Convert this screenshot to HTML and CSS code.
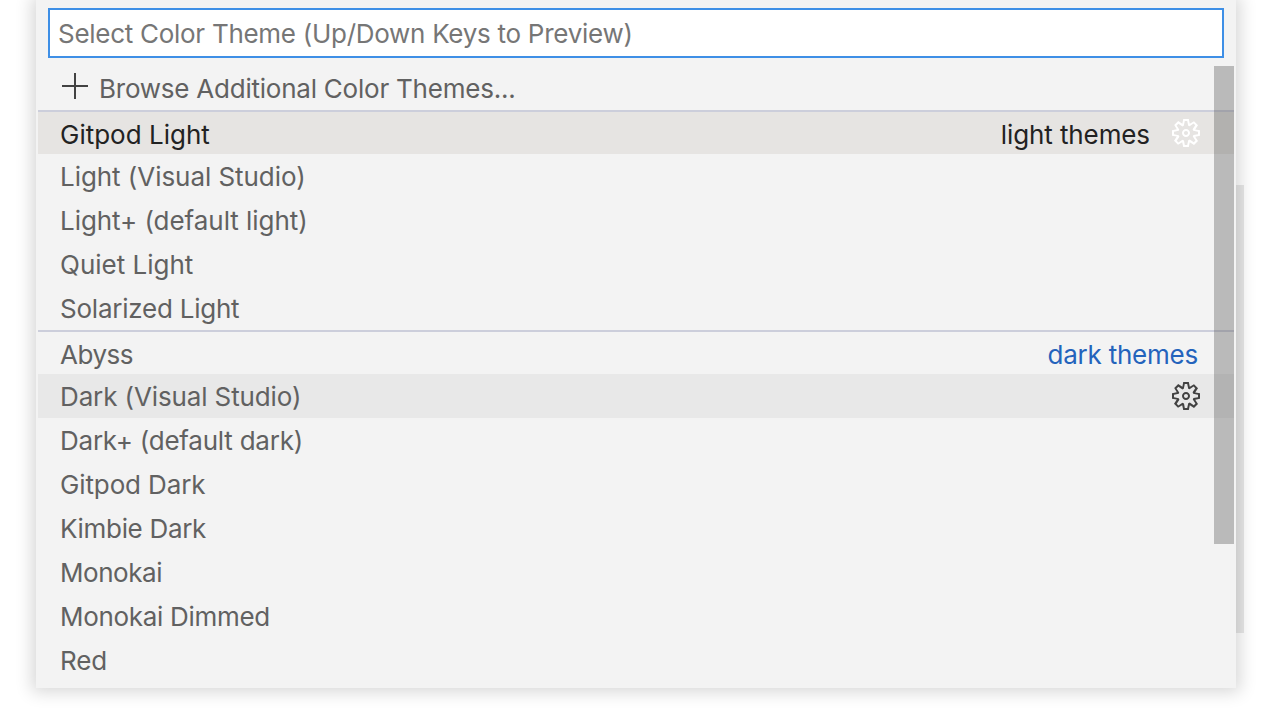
FILE: index.html
```html
<!DOCTYPE html>
<html lang="en">
<head>
<meta charset="utf-8">
<title>Select Color Theme</title>
<link rel="stylesheet" href="styles.css">
</head>
<body>
<svg class="symbols" aria-hidden="true">
  <symbol id="gear" viewBox="0 0 16 16"><path fill-rule="evenodd" d="M9.1 4.4L8.6 2H7.4l-.5 2.4-.7.3-2-1.3-.9.8 1.3 2-.2.7-2.4.5v1.2l2.4.5.3.8-1.3 2 .8.8 2-1.3.8.3.4 2.3h1.2l.5-2.4.8-.3 2 1.3.8-.8-1.3-2 .3-.8 2.3-.4V7.4l-2.4-.5-.3-.8 1.3-2-.8-.8-2 1.3-.7-.2zM9.4 1l.5 2.4L12 2.1l2 2-1.4 2.1 2.4.4v2.8l-2.4.5L14 12l-2 2-2.1-1.4-.5 2.4H6.6l-.5-2.4L4 13.9l-2-2 1.4-2.1L1 9.4V6.6l2.4-.5L2.1 4l2-2 2.1 1.4.4-2.4h2.8zm.6 7c0 1.1-.9 2-2 2s-2-.9-2-2 .9-2 2-2 2 .9 2 2zM8 9c.6 0 1-.4 1-1s-.4-1-1-1-1 .4-1 1 .4 1 1 1z"/></symbol>
</svg>
<div class="page-scrollbar"></div>
<main class="picker">
  <div class="field"><span class="placeholder">Select Color Theme (Up/Down Keys to Preview)</span></div>
  <div class="list">
    <div class="row"><svg class="plus" viewBox="0 0 26 26"><path d="M12 0h2v12h12v2H14v12h-2V14H0v-2h12z"/></svg><span class="label snug">Browse Additional Color Themes...</span></div>
    <div class="row group selected"><span class="label loose">Gitpod Light</span><span class="category">light themes</span><svg class="gear"><use href="#gear"/></svg></div>
    <div class="row"><span class="label open">Light (Visual Studio)</span></div>
    <div class="row"><span class="label open">Light+ (default light)</span></div>
    <div class="row"><span class="label loose">Quiet Light</span></div>
    <div class="row"><span class="label snug">Solarized Light</span></div>
    <div class="row group"><span class="label tight">Abyss</span><span class="category last snug">dark themes</span></div>
    <div class="row hovered"><span class="label">Dark (Visual Studio)</span><svg class="gear"><use href="#gear"/></svg></div>
    <div class="row"><span class="label snug">Dark+ (default dark)</span></div>
    <div class="row"><span class="label">Gitpod Dark</span></div>
    <div class="row"><span class="label close">Kimbie Dark</span></div>
    <div class="row"><span class="label tight">Monokai</span></div>
    <div class="row"><span class="label close">Monokai Dimmed</span></div>
    <div class="row"><span class="label">Red</span></div>
    <div class="scrollbar"></div>
  </div>
</main>
</body>
</html>
```
FILE: styles.css
```css
* { box-sizing: border-box; }
body {
  margin: 0;
  height: 712px;
  overflow: hidden;
  position: relative;
  background: #fff;
  font-family: Inter, "Liberation Sans", sans-serif;
  font-size: 26px;
  line-height: 46px;
  color: #616161;
}
.symbols { position: absolute; width: 0; height: 0; }
.picker {
  position: relative;
  width: 1200px;
  height: 688px;
  margin-left: 36px;
  padding: 8px 2px 6px;
  background: #f3f3f3;
  box-shadow: 0 0 16px 4px rgba(0, 0, 0, .16);
}
.field {
  height: 50px;
  margin: 0 10px 8px;
  padding: 0 8px;
  border: 2px solid #3e8fe6;
  background: #fff;
  color: #767676;
  line-height: 47px;
  letter-spacing: -.28px;
  white-space: nowrap;
}
.list { position: relative; }
.row {
  display: flex;
  align-items: center;
  height: 44px;
  padding: 0 32px 0 22px;
  white-space: nowrap;
}
.label { flex: 1; height: 44px; letter-spacing: -.12px; }
.group { border-top: 2px solid #cccedb; }
.group .label, .group .category { height: 42px; }
.selected { background: #e6e4e2; color: #222; }
.hovered { background: #e8e8e8; }
.category { margin-right: 20px; letter-spacing: -.1px; }
.category.last { margin-right: 4px; color: #2463bc; }
.loose { letter-spacing: 0; }
.open { letter-spacing: -.05px; }
.snug { letter-spacing: -.23px; }
.close { letter-spacing: -.31px; }
.tight { letter-spacing: -.46px; }
.gear { width: 32px; height: 32px; fill: #424242; }
.selected .gear { fill: #fff; }
.plus { width: 26px; height: 26px; margin: 0 11px 4px 2px; fill: #424242; }
.scrollbar {
  position: absolute;
  top: 0;
  right: 0;
  width: 20px;
  height: 478px;
  background: rgba(100, 100, 100, .4);
}
.page-scrollbar {
  position: absolute;
  top: 185px;
  left: 1228px;
  width: 16px;
  height: 448px;
  background: #e8e8e8;
}
```
